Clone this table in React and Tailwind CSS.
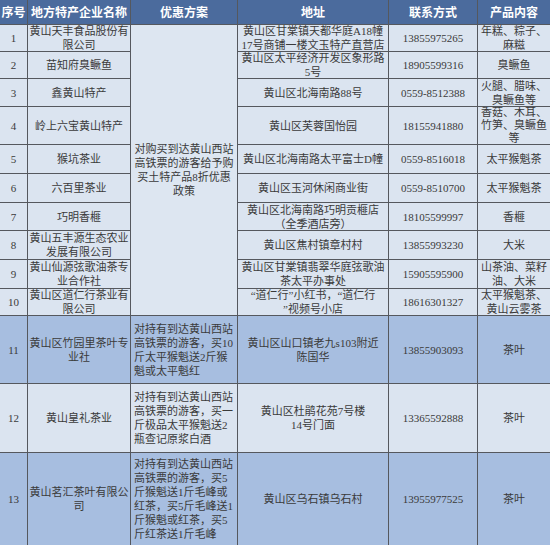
import React from 'react'

const rows = [
  { no: '1', name: ['黄山天丰食品股份有', '限公司'], addr: ['黄山区甘棠镇天都华庭A18幢', '17号商铺一楼文玉特产直营店'], phone: '13855975265', prod: ['年糕、粽子、', '麻糍'] },
  { no: '2', name: ['苗知府臭鳜鱼'], addr: ['黄山区太平经济开发区象形路', '5号'], phone: '18905599316', prod: ['臭鳜鱼'] },
  { no: '3', name: ['鑫黄山特产'], addr: ['黄山区北海南路88号'], phone: '0559-8512388', prod: ['火腿、腊味、', '臭鳜鱼等'] },
  { no: '4', name: ['岭上六宝黄山特产'], addr: ['黄山区芙蓉国怡园'], phone: '18155941880', prod: ['香菇、木耳、', '竹笋、臭鳜鱼', '等'] },
  { no: '5', name: ['猴坑茶业'], addr: ['黄山区北海南路太平富士D幢'], phone: '0559-8516018', prod: ['太平猴魁茶'] },
  { no: '6', name: ['六百里茶业'], addr: ['黄山区玉河休闲商业街'], phone: '0559-8510700', prod: ['太平猴魁茶'] },
  { no: '7', name: ['巧明香榧'], addr: ['黄山区北海南路巧明贡榧店', '（全季酒店旁）'], phone: '18105599997', prod: ['香榧'] },
  { no: '8', name: ['黄山五丰源生态农业', '发展有限公司'], addr: ['黄山区焦村镇章村村'], phone: '13855993230', prod: ['大米'] },
  { no: '9', name: ['黄山仙源弦歌油茶专', '业合作社'], addr: ['黄山区甘棠镇翡翠华庭弦歌油', '茶太平办事处'], phone: '15905595900', prod: ['山茶油、菜籽', '油、大米'] },
  { no: '10', name: ['黄山区道仁行茶业有', '限公司'], addr: ['“道仁行”小红书，“道仁行', '”视频号小店'], phone: '18616301327', prod: ['太平猴魁茶、', '黄山云雾茶'] },
  {
    no: '11', hi: true, name: ['黄山区竹园里茶叶专', '业社'], addr: ['黄山区山口镇老九s103附近', '陈国华'], phone: '13855903093', prod: ['茶叶'],
    offer: ['对持有到达黄山西站', '高铁票的游客，买10', '斤太平猴魁送2斤猴', '魁或太平魁红'],
  },
  {
    no: '12', name: ['黄山皇礼茶业'], addr: ['黄山区杜鹃花苑7号楼', '14号门面'], phone: '13365592888', prod: ['茶叶'],
    offer: ['对持有到达黄山西站', '高铁票的游客，买一', '斤极品太平猴魁送2', '瓶查记原浆白酒'],
  },
  {
    no: '13', hi: true, name: ['黄山茗汇茶叶有限公', '司'], addr: ['黄山区乌石镇乌石村'], phone: '13955977525', prod: ['茶叶'],
    offer: ['对持有到达黄山西站', '高铁票的游客，买5', '斤猴魁送1斤毛峰或', '红茶，买5斤毛峰送1', '斤猴魁或红茶，买5', '斤红茶送1斤毛峰'],
  },
]

const Lines = ({ lines }) => lines.map((l, i) => <div key={i} className="whitespace-nowrap">{l}</div>)

const Cell = ({ children, bg, left, tight, className = '' }) => (
  <div
    className={`${bg} ${left ? 'items-start pl-[3px]' : 'items-center text-center'} ${tight ? 'leading-[13px]' : 'leading-[14px]'} flex flex-col justify-center overflow-hidden ${className}`}
  >
    {children}
  </div>
)

const App = () => {
  return (
    <div
      className="w-[550px] h-[545px] overflow-hidden bg-[#55585e] text-[11px] text-[#3a3a3a]"
      style={{ fontFamily: '"Liberation Serif", "Noto Sans CJK SC", serif' }}
    >
      <div className="grid gap-px grid-cols-[27px_102px_106px_150px_88px_72px] grid-rows-[24px_26px_26px_27px_37px_28px_28px_27px_28px_28px_26px_67px_68px_92px]">
        {/* Header */}
        {['序号', '地方特产企业名称', '优惠方案', '地址', '联系方式', '产品内容'].map((h) => (
          <div
            key={h}
            className="bg-[#4b6b9d] text-white font-bold text-[12px] flex items-center justify-center whitespace-nowrap"
            style={{ fontFamily: '"Noto Sans CJK SC", sans-serif' }}
          >
            {h}
          </div>
        ))}

        {rows.map((r, idx) => {
          const bg = r.hi ? 'bg-[#a7bee0]' : 'bg-[#dbe4f0]'
          return (
            <React.Fragment key={r.no}>
              <Cell bg={bg}>{r.no}</Cell>
              <Cell bg={bg}><Lines lines={r.name} /></Cell>
              {idx === 0 && (
                <Cell bg="bg-[#dde6f1]" className="row-span-10">
                  <Lines lines={['对购买到达黄山西站', '高铁票的游客给予购', '买土特产品8折优惠', '政策']} />
                </Cell>
              )}
              {r.offer && (
                <Cell bg={bg} left>
                  <Lines lines={r.offer} />
                </Cell>
              )}
              <Cell bg={bg}><Lines lines={r.addr} /></Cell>
              <Cell bg={bg}>{r.phone}</Cell>
              <Cell bg={bg} tight={r.prod.length > 2}><Lines lines={r.prod} /></Cell>
            </React.Fragment>
          )
        })}
      </div>
    </div>
  )
}

export default App
